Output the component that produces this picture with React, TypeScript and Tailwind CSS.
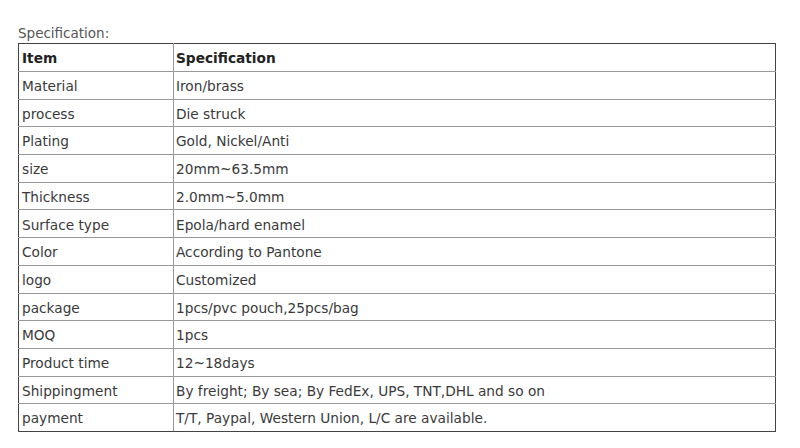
import React from "react";

const rows: [string, string][] = [
  ["Material", "Iron/brass"],
  ["process", "Die struck"],
  ["Plating", "Gold, Nickel/Anti"],
  ["size", "20mm~63.5mm"],
  ["Thickness", "2.0mm~5.0mm"],
  ["Surface type", "Epola/hard enamel"],
  ["Color", "According to Pantone"],
  ["logo", "Customized"],
  ["package", "1pcs/pvc pouch,25pcs/bag"],
  ["MOQ", "1pcs"],
  ["Product time", "12~18days"],
  ["Shippingment", "By freight; By sea; By FedEx, UPS, TNT,DHL and so on"],
  ["payment", "T/T, Paypal, Western Union, L/C are available."],
];

export default function App() {
  return (
    <div
      className="w-[800px] h-[448px] bg-white pl-[18px] pt-[24px] text-[13.7px] text-[#3a3a3a]"
      style={{ fontFamily: '"DejaVu Sans", Verdana, sans-serif' }}
    >
      <div className="h-[19px] leading-[19px] text-[13.5px] text-[#555]">Specification:</div>
      <table className="w-[758px] border-collapse border border-[#444]">
        <tbody>
          <tr className="h-[28px]">
            <td className="w-[155px] border border-[#999] border-t-[#444] border-l-[#444] pl-[3px] pt-[2px] font-bold text-[#222] align-middle">Item</td>
            <td className="border border-[#999] border-t-[#444] border-r-[#444] pl-[2px] pt-[2px] font-bold text-[#222] align-middle">Specification</td>
          </tr>
          {rows.map(([a, b], i) => (
            <tr key={a} className="h-[27.7px]">
              <td className={"border border-[#999] border-l-[#444] pl-[3px] pt-[2px] align-middle" + (i === rows.length - 1 ? " border-b-[#444]" : "")}>{a}</td>
              <td className={"border border-[#999] border-r-[#444] pl-[2px] pt-[2px] align-middle" + (i === rows.length - 1 ? " border-b-[#444]" : "")}>{b}</td>
            </tr>
          ))}
        </tbody>
      </table>
    </div>
  );
}
